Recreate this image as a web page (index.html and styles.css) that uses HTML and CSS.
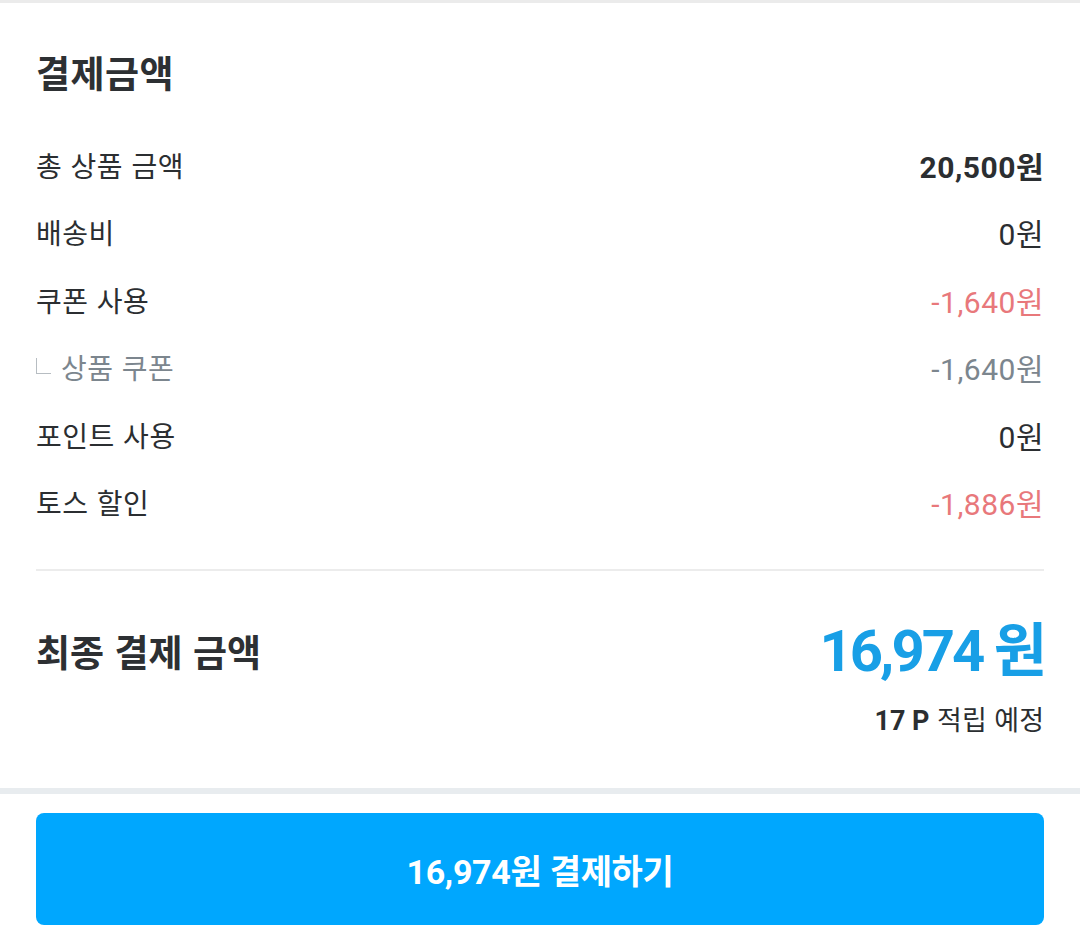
FILE: index.html
```html
<!DOCTYPE html>
<html lang="ko">
<head>
<meta charset="utf-8">
<link rel="stylesheet" href="styles.css">
</head>
<body>
<div class="top-line"></div>
<section class="summary">
  <h2 class="title">결제금액</h2>
  <ul class="rows">
    <li class="row"><span class="label">총 상품 금액</span><span class="value strong">20,500원</span></li>
    <li class="row"><span class="label">배송비</span><span class="value">0원</span></li>
    <li class="row"><span class="label">쿠폰 사용</span><span class="value red">-1,640원</span></li>
    <li class="row sub"><span class="label"><span class="corner"></span>상품 쿠폰</span><span class="value">-1,640원</span></li>
    <li class="row"><span class="label">포인트 사용</span><span class="value">0원</span></li>
    <li class="row"><span class="label">토스 할인</span><span class="value red">-1,886원</span></li>
  </ul>
  <div class="divider"></div>
  <div class="final">
    <span class="final-label">최종 결제 금액</span>
    <span class="final-amount">16,974 원</span>
  </div>
  <div class="points"><b>17 P</b> 적립 예정</div>
</section>
<div class="band"></div>
<footer class="footer">
  <button class="pay">16,974원 결제하기</button>
</footer>
</body>
</html>
```
FILE: styles.css
```css
html, body {
  margin: 0;
  padding: 0;
  background: #fff;
}
body {
  width: 1080px;
  height: 941px;
  overflow: hidden;
  font-family: "Noto Sans CJK KR", "Noto Sans", sans-serif;
  color: #2b2e31;
}
.top-line {
  height: 3px;
  background: #ebebeb;
}
.summary {
  padding: 0 36px;
}
.title {
  margin: 0;
  padding-top: 44px;
  font-size: 37px;
  line-height: 50px;
  font-weight: 700;
  letter-spacing: 0.5px;
  color: #2d3033;
}
.rows {
  list-style: none;
  margin: 0;
  padding: 34px 0 0;
}
.row {
  display: flex;
  justify-content: space-between;
  align-items: center;
  height: 67.5px;
  font-size: 28px;
  letter-spacing: 0.5px;
}
.label {
  display: flex;
  align-items: center;
}
.value {
  font-family: Roboto, "Noto Sans CJK KR", sans-serif;
  font-size: 30px;
  letter-spacing: 0.5px;
  color: #2b2e31;
}
.value.strong {
  font-weight: 700;
}
.value.red {
  color: #e8787b;
}
.row.sub .label,
.row.sub .value {
  color: #7c868e;
}
.corner {
  display: inline-block;
  width: 14px;
  height: 15px;
  border-left: 1.5px solid #b7bdc2;
  border-bottom: 1.5px solid #b7bdc2;
  margin: 0 10px 0 0;
  position: relative;
  top: -1px;
}
.divider {
  margin-top: 33px;
  height: 2px;
  background: #ececec;
}
.final {
  display: flex;
  justify-content: space-between;
  align-items: center;
  height: 66px;
  margin-top: 47px;
}
.final-label {
  font-size: 37px;
  font-weight: 700;
  letter-spacing: 0;
  color: #2d3033;
}
.final-amount {
  font-family: Roboto, "Noto Sans CJK KR", sans-serif;
  font-size: 58px;
  font-weight: 700;
  letter-spacing: -3px;
  color: #189fe6;
  line-height: 66px;
}
.points {
  text-align: right;
  font-size: 27px;
  line-height: 36px;
  margin-top: 17px;
  color: #2b2e31;
}
.points b {
  font-family: Roboto, "Noto Sans CJK KR", sans-serif;
  font-weight: 700;
}
.band {
  margin-top: 49px;
  height: 6px;
  background: #e8ecef;
}
.footer {
  padding: 19px 36px 0;
}
.pay {
  display: block;
  width: 100%;
  height: 112px;
  border: none;
  border-radius: 8px;
  background: #00a7fe;
  color: #fff;
  font-family: Roboto, "Noto Sans CJK KR", sans-serif;
  font-size: 34px;
  font-weight: 700;
  letter-spacing: -0.3px;
}
```
